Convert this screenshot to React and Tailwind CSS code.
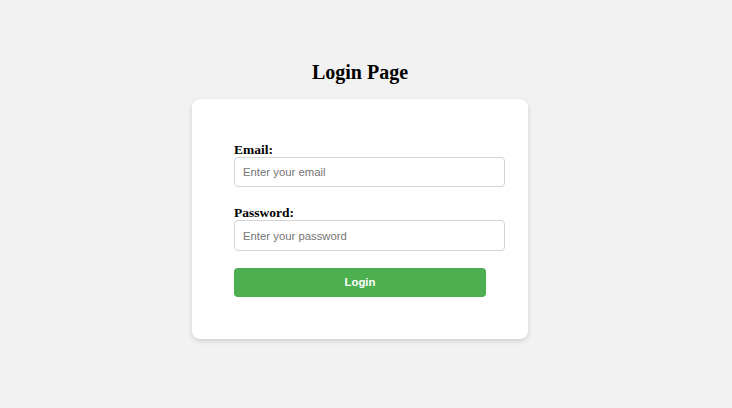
export default function App() {
  return (
    <div className="min-h-[408px] w-full bg-[#f2f2f2]">
      <div className="w-[720px] flex flex-col items-center pt-[61px]">
        <h2 className="font-['Liberation_Serif',serif] font-bold text-[20px] leading-[23px] text-black mb-[15px]">
          Login Page
        </h2>

        <form
          className="w-[336px] bg-white rounded-[8px] shadow-[0_2px_5px_rgba(0,0,0,0.15)] pt-[43px] pb-[42px] pl-[42px]"
          onSubmit={(e) => e.preventDefault()}
        >
          <label className="block font-['Liberation_Serif',serif] font-bold text-[13.5px] leading-[15px] text-black">
            Email:
          </label>
          <input
            type="email"
            placeholder="Enter your email"
            className="block w-[271px] h-[30px] px-[8px] border border-[#d4d4d4] rounded-[4px] font-['Liberation_Sans',Arial,sans-serif] text-[11.33px] text-black placeholder:text-[#757575] outline-none"
          />

          <label className="block mt-[18px] font-['Liberation_Serif',serif] font-bold text-[13.5px] leading-[15px] text-black">
            Password:
          </label>
          <input
            type="password"
            placeholder="Enter your password"
            className="block w-[271px] h-[31px] px-[8px] border border-[#d4d4d4] rounded-[4px] font-['Liberation_Sans',Arial,sans-serif] text-[11.33px] text-black placeholder:text-[#757575] outline-none"
          />

          <button
            type="submit"
            className="block mt-[17px] w-[252px] h-[29px] bg-[#4caf50] rounded-[4px] text-white font-bold font-['Liberation_Sans',Arial,sans-serif] text-[11.33px]"
          >
            Login
          </button>
        </form>
      </div>
    </div>
  );
}
